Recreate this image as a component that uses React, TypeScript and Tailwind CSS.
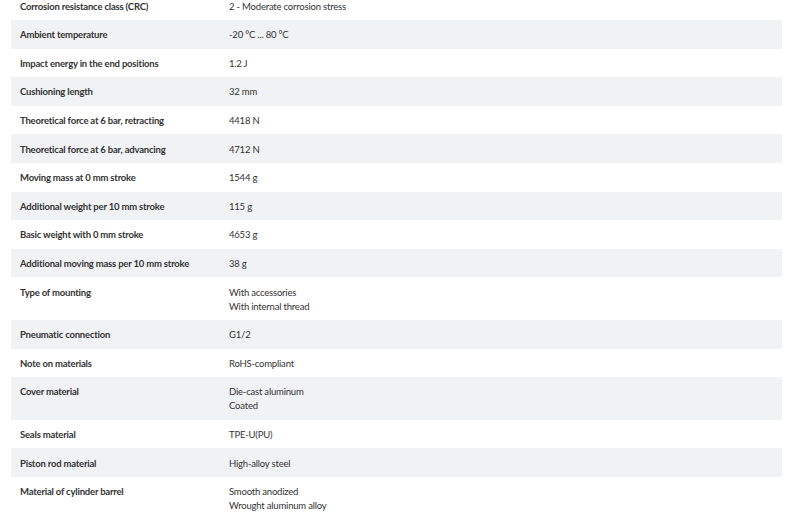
import React from 'react';

const SPECS: { label: string; value: string[] }[] = [
  { label: 'Corrosion resistance class (CRC)', value: ['2 - Moderate corrosion stress'] },
  { label: 'Ambient temperature', value: ['-20 °C ... 80 °C'] },
  { label: 'Impact energy in the end positions', value: ['1.2 J'] },
  { label: 'Cushioning length', value: ['32 mm'] },
  { label: 'Theoretical force at 6 bar, retracting', value: ['4418 N'] },
  { label: 'Theoretical force at 6 bar, advancing', value: ['4712 N'] },
  { label: 'Moving mass at 0 mm stroke', value: ['1544 g'] },
  { label: 'Additional weight per 10 mm stroke', value: ['115 g'] },
  { label: 'Basic weight with 0 mm stroke', value: ['4653 g'] },
  { label: 'Additional moving mass per 10 mm stroke', value: ['38 g'] },
  { label: 'Type of mounting', value: ['With accessories', 'With internal thread'] },
  { label: 'Pneumatic connection', value: ['G1/2'] },
  { label: 'Note on materials', value: ['RoHS-compliant'] },
  { label: 'Cover material', value: ['Die-cast aluminum', 'Coated'] },
  { label: 'Seals material', value: ['TPE-U(PU)'] },
  { label: 'Piston rod material', value: ['High-alloy steel'] },
  { label: 'Material of cylinder barrel', value: ['Smooth anodized', 'Wrought aluminum alloy'] },
];

export default function App() {
  return (
    <div className="h-[524px] overflow-hidden bg-white font-['Lato',sans-serif] text-[9.5px] leading-[14px] tracking-[-0.2px] text-[#333]">
      <div className="-mt-[8.6px] ml-[11px] w-[771px]">
        {SPECS.map(({ label, value }, i) => (
          <div
            key={label}
            className={`flex pt-[8.3px] pb-[6.3px] ${i % 2 === 1 ? 'bg-[#f1f2f3]' : 'bg-white'}`}
          >
            <div className="w-[218px] shrink-0 pl-[9px] font-bold">{label}</div>
            <div className="flex flex-col">
              {value.map((v) => (
                <span key={v}>{v}</span>
              ))}
            </div>
          </div>
        ))}
      </div>
    </div>
  );
}
